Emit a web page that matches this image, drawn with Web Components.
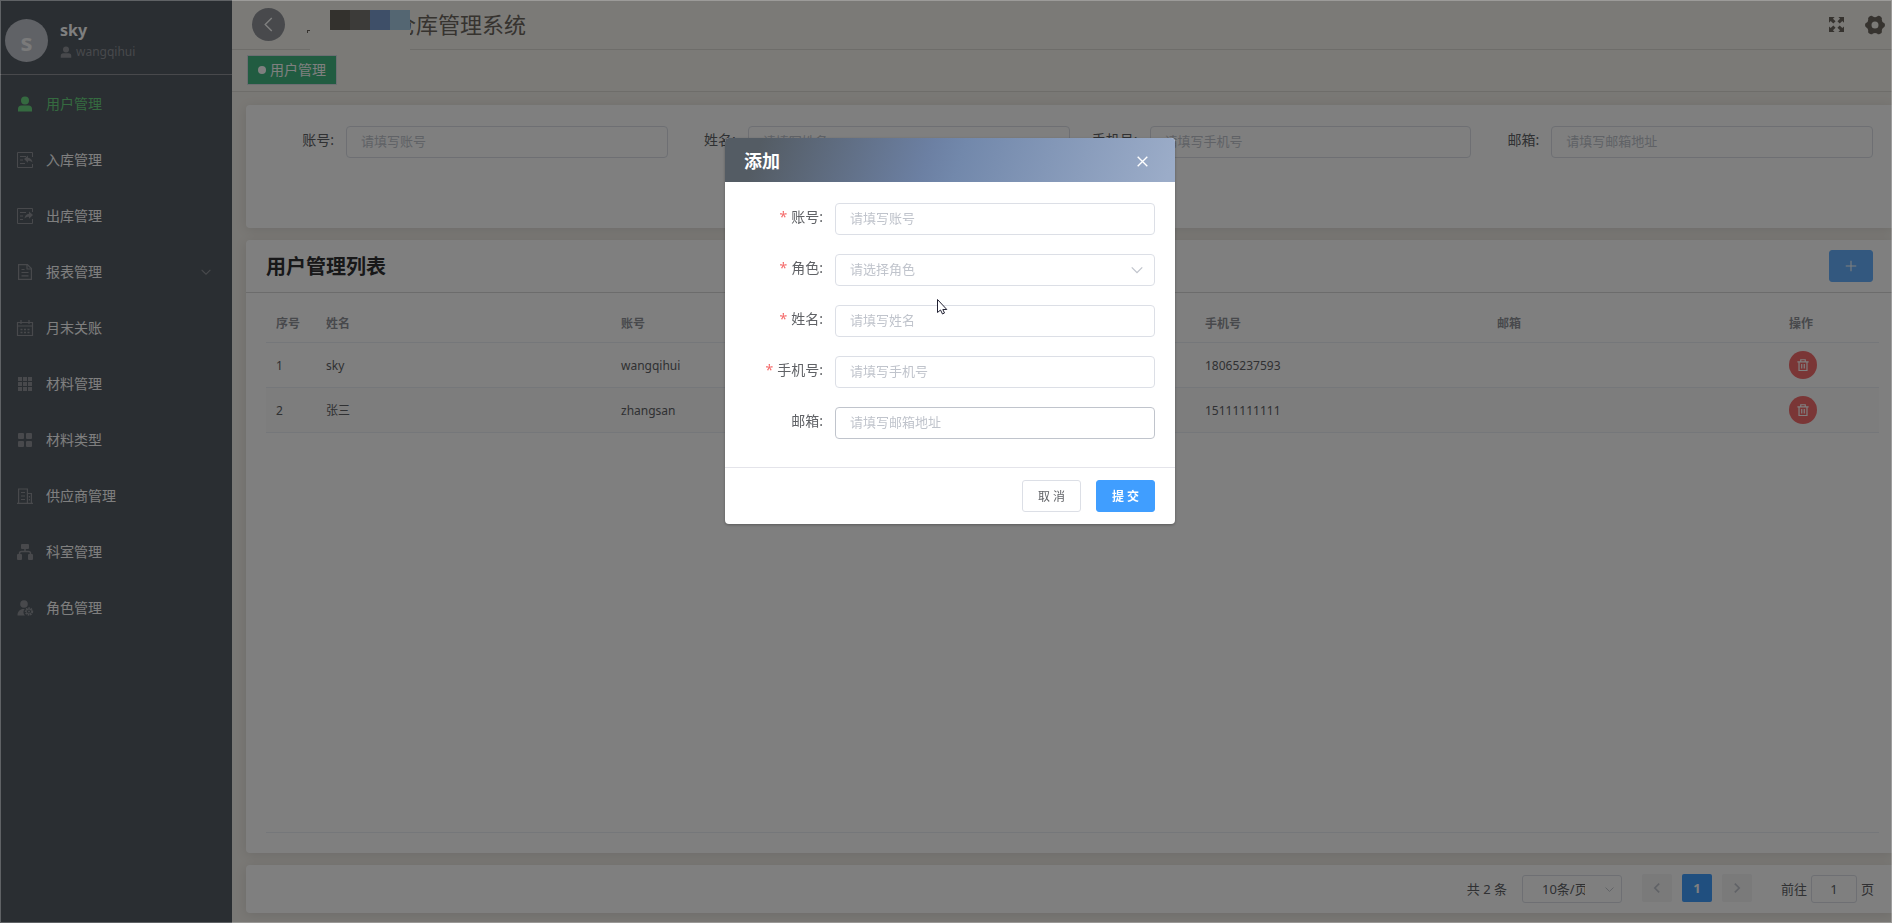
<!DOCTYPE html>
<html lang="zh-CN">
<head>
<meta charset="utf-8">
<meta name="viewport" content="width=device-width, initial-scale=1">
<title>仓库管理系统</title>
<style>
html, body { margin: 0; }
body {
  font-family: "Noto Sans", "Noto Sans CJK SC", sans-serif;
  font-size: 14px;
  line-height: 20px;
  color: #606266;
  background: #f3f0ea;
  overflow-x: hidden;
}
</style>
</head>
<body>
<app-root></app-root>

<script>
const BASE = `<style>
*, *::before, *::after { box-sizing: border-box; }
button, input, select { font-family: inherit; margin: 0; }
a { color: inherit; text-decoration: none; }
</style>`;

function define(name, render) {
  customElements.define(name, class extends HTMLElement {
    connectedCallback() {
      if (this.shadowRoot) return;
      const t = document.createElement('template');
      t.innerHTML = BASE + render(this);
      this.attachShadow({ mode: 'open' }).append(t.content.cloneNode(true));
    }
  });
}

const ICONS = {
  user: '<circle cx="8" cy="4.500" r="4"/><path d="M1 15.500v-2.500a3.500 3.500 0 0 1 3.500-3.500h7a3.500 3.500 0 0 1 3.500 3.500v2.500z"/>',
  inbound: '<g fill="none" stroke="currentColor"><path d="M15.500 5V.5H.5v15h15V12"/><path d="M3 4.500h6M3 8h3M3 11.500h5"/></g><path d="M7 7l4-3.500v2.200c2.500.2 4.300 2 4.500 4.800-1.200-1.300-2.500-1.800-4.500-1.800v2.100z"/>',
  outbound: '<g fill="none" stroke="currentColor"><path d="M15.500 4V.5H.5v15h15V11"/><path d="M3 4.500h6M3 8h3M3 11.500h3"/></g><path d="M16 7l-4-3.500v2.200c-2.500.2-4.300 2-4.500 4.800 1.200-1.300 2.500-1.800 4.500-1.800v2.100z"/>',
  doc: '<g fill="none" stroke="currentColor" stroke-width="1.200"><path d="M1.600.6h8.800l4 4v10.800H1.600z"/><path d="M10 .6v4.400h4.400M4.500 5.500h3M4.500 8.500h7M4.500 11.800h7"/></g>',
  calendar: '<g fill="none" stroke="currentColor" stroke-width="1.200"><path d="M.5 2.500h15v13H.5zM.5 6h15M4 0v4M12 0v4"/><path stroke-width="1.500" stroke-dasharray="2 1.500" d="M3.500 9.500h9M3.500 12.500h9"/></g>',
  grid9: '<path d="M1 1h4v4H1zM6 1h4v4H6zM11 1h4v4h-4zM1 6h4v4H1zM6 6h4v4H6zM11 6h4v4h-4zM1 11h4v4H1zM6 11h4v4H6zM11 11h4v4h-4z"/>',
  grid4: '<rect x="1" y="1" width="6" height="6" rx="1"/><rect x="9" y="1" width="6" height="6" rx="1"/><rect x="1" y="9" width="6" height="6" rx="1"/><rect x="9" y="9" width="6" height="6" rx="1"/>',
  office: '<g fill="none" stroke="currentColor" stroke-width="1.200"><path d="M0 15.300h16M1.600 15V1h8.800v14M10.400 5.500h4V15M4 4.500h4M4 8h4M4 11.500h4"/><path d="M12.400 8v1.500M12.400 11v1.500"/></g>',
  tree: '<rect x="4" y="0" width="8" height="5" rx="1"/><rect x="0" y="10" width="5" height="6" rx="1"/><rect x="11" y="10" width="5" height="6" rx="1"/><path fill="none" stroke="currentColor" stroke-width="1.500" d="M8 4v3.500M2.500 11V9.500q0-2 2-2h7q2 0 2 2V11"/>',
  role: '<circle cx="7" cy="4" r="3.800"/><path d="M.5 15.500c0-4 2.500-6.500 6-6.500h1.200c-1.800 2-1.600 4.700.2 6.500z"/><circle cx="12" cy="11.500" r="3.300" fill="none" stroke="currentColor" stroke-width="1.800" stroke-dasharray="1.600 .8"/><circle cx="12" cy="11.500" r="2.500" fill="none" stroke="currentColor"/><circle cx="12" cy="11.500" r="1"/>',
  down: '<path fill="none" stroke="currentColor" stroke-width="1.700" d="M1 4.500l7 7 7-7"/>',
  left: '<path fill="none" stroke="currentColor" stroke-width="1.500" d="M11.500 1l-7 7 7 7"/>',
  prev: '<path fill="none" stroke="currentColor" stroke-width="2.600" d="M11.500 1l-7 7 7 7"/>',
  next: '<path fill="none" stroke="currentColor" stroke-width="2.600" d="M4.500 1l7 7-7 7"/>',
  close: '<path fill="none" stroke="currentColor" stroke-width="2" d="M1 1l14 14M15 1L1 15"/>',
  plus: '<path fill="none" stroke="currentColor" stroke-width="1.400" d="M8 1v14M1 8h14"/>',
  trash: '<g fill="none" stroke="currentColor" stroke-width="1.600"><path d="M.5 3.700h15M5 3.500V1h6v2.500M2.700 4v11.300h10.600V4M6.300 6.500v6M9.700 6.500v6"/></g>',
  full: '<path d="M0 0h6L4.200 1.800 7 4.600 4.600 7 1.800 4.200 0 6zM16 0v6l-1.800-1.800L11.400 7 9 4.600l2.800-2.800L10 0zM0 16v-6l1.800 1.800L4.600 9 7 11.400l-2.800 2.800L6 16zM16 16h-6l1.800-1.800L9 11.400 11.400 9l2.800 2.800L16 10z"/>',
  gear: '<path fill-rule="evenodd" d="M4.200.8q1.300-.7 2.100.4 1.700 1 3.400 0 .8-1.100 2.100-.4l1.100.7q1 .8.500 2 .1 1.900 1.500 2.600 1.100.3 1.100 1.900t-1.100 1.900q-1.400.7-1.500 2.600.5 1.200-.5 2l-1.100.7q-1.300.7-2.100-.4-1.700-1-3.400 0-.8 1.100-2.100.4l-1.100-.7q-1-.8-.5-2-.1-1.900-1.500-2.600Q0 9.600 0 8t1.100-1.900q1.400-.7 1.500-2.600-.5-1.200.5-2zM8 5.200a2.800 2.800 0 1 0 0 5.600 2.800 2.800 0 0 0 0-5.600z"/>'
};

define('ui-icon', el => {
  const s = el.getAttribute('size') || 14;
  return `<style>
:host { display: inline-flex; flex: none; width: ${s}px; height: ${s}px; }
svg { width: 100%; height: 100%; fill: currentColor; display: block; overflow: visible; }
</style><svg viewBox="0 0 16 16" aria-hidden="true">${ICONS[el.getAttribute('name')]}</svg>`;
});

define('user-badge', () => `<style>
:host { display: flex; align-items: center; height: 75px; padding: 6px 5px 0; gap: 12px; border-bottom: 1px solid #909399; }
.avatar { flex: none; width: 43px; height: 43px; border-radius: 50%; background: #c0c4cc; color: #f4f4f5; font-size: 24px; font-weight: 700; line-height: 46px; text-align: center; }
.name { color: #fff; font-size: 16px; font-weight: 700; line-height: 24px; }
.account { display: flex; align-items: center; gap: 4px; color: #909399; font-size: 12px; line-height: 20px; }
</style>
<div class="avatar">s</div>
<div><div class="name">sky</div>
<div class="account"><ui-icon name="user" size="12"></ui-icon>wangqihui</div></div>`);

define('menu-item', el => `<style>
:host { display: block; }
a { display: flex; align-items: center; height: 56px; padding: 0 21px 0 17px; gap: 13px; color: #fff; }
ui-icon { color: #909399; }
:host([active]) a, :host([active]) ui-icon { color: #6ad580; }
.arrow { margin-left: auto; }
</style>
<a href="#"><ui-icon name="${el.getAttribute('icon')}" size="16"></ui-icon><slot></slot>${el.hasAttribute('sub') ? '<ui-icon class="arrow" name="down" size="10"></ui-icon>' : ''}</a>`);

define('side-menu', () => `<style>
:host { display: block; background: #545c64; }
nav { padding-top: 1px; }
</style>
<user-badge></user-badge>
<nav>
<menu-item icon="user" active>用户管理</menu-item>
<menu-item icon="inbound">入库管理</menu-item>
<menu-item icon="outbound">出库管理</menu-item>
<menu-item icon="doc" sub>报表管理</menu-item>
<menu-item icon="calendar">月末关账</menu-item>
<menu-item icon="grid9">材料管理</menu-item>
<menu-item icon="grid4">材料类型</menu-item>
<menu-item icon="office">供应商管理</menu-item>
<menu-item icon="tree">科室管理</menu-item>
<menu-item icon="role">角色管理</menu-item>
</nav>`);

define('top-bar', () => `<style>
:host { display: flex; align-items: center; height: 50px; padding: 0 7px 0 20px; border-bottom: 1px solid #dcdad4; position: relative; color: #6c665e; }
button { border: 0; padding: 0; background: none; color: inherit; display: grid; place-items: center; }
.back { width: 33px; height: 33px; border-radius: 50%; background: #909399; color: #fff; }
h1 { margin: 0 auto 0 109px; padding-bottom: 2px; font-size: 22px; line-height: 32px; font-weight: 400; color: #6c665e; }
.tools { display: flex; align-items: center; gap: 21px; }
.mask { position: absolute; left: 78px; top: 10px; width: 100px; height: 40px; background: #f6f4ef; }
.mask i { float: left; width: 20px; height: 20px; background: var(--c); }
.mask i:first-child { margin-left: 20px; }
.dash { position: absolute; left: 75px; top: 30px; width: 3px; height: 3px; border: solid #6c665e; border-width: 1px 0 0 1px; }
</style>
<button class="back" aria-label="返回"><ui-icon name="left" size="15"></ui-icon></button>
<h1>仓库管理系统</h1>
<span class="dash"></span>
<span class="mask"><i style="--c:#66635b"></i><i style="--c:#797673"></i><i style="--c:#7c9fd0"></i><i style="--c:#a8cde4"></i></span>
<div class="tools">
<button aria-label="全屏"><ui-icon name="full" size="15"></ui-icon></button>
<button aria-label="设置"><ui-icon name="gear" size="20"></ui-icon></button>
</div>`);

define('tag-bar', () => `<style>
:host { display: flex; align-items: flex-start; height: 42px; padding: 5px 15px; border-bottom: 1px solid #dcdad4; }
a { display: flex; align-items: center; gap: 4px; height: 30px; padding: 0 10px; background: #42b983; border: 1px solid #d8dce5; color: #fff; }
a::before { content: ""; width: 8px; height: 8px; border-radius: 50%; background: #fff; }
</style><a href="#">用户管理</a>`);

define('panel-card', () => `<style>
:host { display: block; background: #fff; border-radius: 4px 0 0 4px; box-shadow: 0 2px 12px rgba(0,0,0,.1); }
</style><slot></slot>`);

define('form-field', el => {
  const label = el.getAttribute('label'), ph = el.getAttribute('placeholder');
  const control = el.hasAttribute('select')
    ? `<select id="c"><option>${ph}</option></select><ui-icon name="down" size="12"></ui-icon>`
    : `<input id="c" type="text" placeholder="${ph}">`;
  return `<style>
:host { display: flex; align-items: center; min-width: 0; }
label { flex: none; width: var(--label-width, 80px); height: 32px; padding-right: 12px; text-align: right; line-height: 28px; }
:host([required]) label::before { content: "*"; color: #f56c6c; margin-right: 4px; }
.box { position: relative; flex: 1; min-width: 0; display: flex; }
input, select { width: 100%; height: 32px; padding: 0 14px 2px; border: 1px solid #dcdfe6; border-radius: 4px; background: #fff; font-size: 13px; color: #606266; outline: 0; appearance: none; }
select, input::placeholder { color: #c0c4cc; opacity: 1; }
:host([hovered]) input { border-color: #c0c4cc; }
ui-icon { position: absolute; right: 12px; top: 10px; color: #c0c4cc; pointer-events: none; }
</style><label for="c">${label}:</label><span class="box">${control}</span>`;
});

define('search-form', () => `<style>
:host { display: block; }
form { display: grid; grid-template-columns: repeat(4, 1fr); padding: 21px 19px 70px 20px; }
</style>
<form>
<form-field label="账号" placeholder="请填写账号"></form-field>
<form-field label="姓名" placeholder="请填写姓名"></form-field>
<form-field label="手机号" placeholder="请填写手机号"></form-field>
<form-field label="邮箱" placeholder="请填写邮箱地址"></form-field>
</form>`);

define('user-list', () => {
  const rows = [[1, 'sky', 'wangqihui', '18065237593'], [2, '张三', 'zhangsan', '15111111111']];
  return `<style>
:host { display: flex; flex-direction: column; height: 100%; }
header { display: flex; align-items: center; justify-content: space-between; height: 53px; padding: 0 19px 0 20px; border-bottom: 1px solid #d9d9d9; }
h2 { margin: 0; padding-top: 2px; font-size: 20px; line-height: 28px; font-weight: 700; color: #303133; }
.add { width: 44px; height: 32px; padding: 0; border: 1px solid #66b1ff; border-radius: 3px; background: #66b1ff; color: #fff; display: grid; place-items: center; }
.body { flex: 1; margin: 10px 13px 20px 20px; border-bottom: 1px solid #ebeef5; }
table { width: 100%; table-layout: fixed; border-collapse: separate; border-spacing: 0; font-size: 12px; line-height: 20px; text-align: left; }
th, td { padding: 2px 10px 0; border-bottom: 1px solid #ebeef5; }
th { height: 40px; color: #909399; font-weight: 700; }
td { height: 45px; color: #606266; }
td:last-child { padding-top: 0; }
tr:nth-child(even) td { background: #fafafa; }
.no { width: 50px; } .name { width: 295px; } .op { width: 100px; }
.del { width: 28px; height: 28px; padding: 0; border: 0; border-radius: 50%; background: #f56c6c; color: #fff; display: grid; place-items: center; }
</style>
<header><h2>用户管理列表</h2><button class="add" aria-label="添加"><ui-icon name="plus" size="12"></ui-icon></button></header>
<div class="body"><table>
<thead><tr><th class="no">序号</th><th class="name">姓名</th><th>账号</th><th></th><th>手机号</th><th>邮箱</th><th class="op">操作</th></tr></thead>
<tbody>${rows.map(r => `<tr><td>${r[0]}</td><td>${r[1]}</td><td>${r[2]}</td><td></td><td>${r[3]}</td><td></td><td><button class="del" aria-label="删除"><ui-icon name="trash" size="12"></ui-icon></button></td></tr>`).join('')}</tbody>
</table></div>`;
});

define('page-nav', () => `<style>
:host { display: flex; justify-content: flex-end; align-items: center; height: 48px; padding: 0 18px; font-size: 13px; }
.size { position: relative; margin: 0 20px 0 15px; display: flex; }
select, input { height: 28px; border: 1px solid #dcdfe6; border-radius: 3px; background: #fff; color: #606266; font-size: 13px; text-align: center; appearance: none; outline: 0; }
select { width: 100px; padding: 0 36px 0 19px; }
.size ui-icon { position: absolute; right: 8px; top: 10px; color: #c0c4cc; pointer-events: none; }
.pages { display: flex; gap: 10px; margin-right: 29px; }
.pages button { width: 30px; height: 28px; margin-bottom: 2px; padding: 0; border: 0; border-radius: 2px; background: #f4f4f5; color: #c0c4cc; font-size: 13px; font-weight: 700; display: grid; place-items: center; }
.pages .on { background: #409eff; color: #fff; }
label { display: flex; align-items: center; gap: 4px; }
input { width: 46px; padding: 0 3px; }
</style>
<span>共 2 条</span>
<span class="size"><select aria-label="每页条数"><option>10条/页</option></select><ui-icon name="down" size="9"></ui-icon></span>
<span class="pages"><button aria-label="上一页"><ui-icon name="prev" size="10"></ui-icon></button><button class="on">1</button><button aria-label="下一页"><ui-icon name="next" size="10"></ui-icon></button></span>
<label>前往<input type="text" value="1">页</label>`);

define('modal-layer', () => `<style>
:host { position: fixed; inset: 0; display: flex; justify-content: center; align-items: flex-start; padding: 138px 0 0 8px; background: rgba(0,0,0,.5); }
:host::after { content: ""; position: absolute; inset: 0; border: 1px solid rgba(255,255,255,.25); pointer-events: none; }
</style><slot></slot>`);

define('user-dialog', () => `<style>
:host { display: block; width: 450px; background: #fff; border-radius: 4px; box-shadow: 0 1px 3px rgba(0,0,0,.3); --label-width: 90px; }
header { display: flex; align-items: center; justify-content: space-between; height: 44px; padding: 2px 27px 0 19px; border-radius: 4px 4px 0 0; background: linear-gradient(110deg, #545c64 8%, #6c80a3 45%, #7288ab 52%, #9bacc8 98%); color: #fff; }
h2 { margin: 0; font-size: 18px; line-height: 26px; font-weight: 700; }
button { font-size: 12px; }
header button { border: 0; padding: 0; background: none; color: #fff; display: grid; }
.fields { display: grid; gap: 19px; padding: 21px 20px 28px; }
footer { display: flex; justify-content: flex-end; gap: 15px; padding: 12px 20px; border-top: 1px solid #e4e4ea; }
footer button { min-width: 59px; height: 32px; padding: 0 14px; border: 1px solid #dcdfe6; border-radius: 3px; background: #fff; color: #606266; }
footer .primary { background: #409eff; border-color: #409eff; color: #fff; font-weight: 700; }
</style>
<header><h2>添加</h2><button type="button" aria-label="关闭"><ui-icon name="close" size="11"></ui-icon></button></header>
<form>
<div class="fields">
<form-field required label="账号" placeholder="请填写账号"></form-field>
<form-field required select label="角色" placeholder="请选择角色"></form-field>
<form-field required label="姓名" placeholder="请填写姓名"></form-field>
<form-field required label="手机号" placeholder="请填写手机号"></form-field>
<form-field hovered label="邮箱" placeholder="请填写邮箱地址"></form-field>
</div>
<footer><button type="button">取 消</button><button type="button" class="primary">提 交</button></footer>
</form>`);

define('mouse-pointer', () => `<style>
:host { position: absolute; left: 937px; top: 299px; pointer-events: none; }
svg { display: block; }
</style><svg width="12" height="17" viewBox="0 0 12 17"><path d="M.5.5v13l3-2.500 2 4 2-1-1.700-3.500h4z" fill="#fff" stroke="#222233"/></svg>`);

define('app-root', () => `<style>
:host { display: grid; grid-template-columns: 232px minmax(0, 1fr); min-height: 100vh; }
main { display: flex; flex-direction: column; background: #f3f0ea; }
top-bar, tag-bar { background: #f6f4ef; }
.content { flex: 1; display: flex; flex-direction: column; gap: 12px; padding: 13px 0 10px 14px; }
.list { flex: 1; }
</style>
<side-menu></side-menu>
<main>
<top-bar></top-bar>
<tag-bar></tag-bar>
<div class="content">
<panel-card><search-form></search-form></panel-card>
<panel-card class="list"><user-list></user-list></panel-card>
<panel-card><page-nav></page-nav></panel-card>
</div>
</main>
<modal-layer><user-dialog></user-dialog><mouse-pointer></mouse-pointer></modal-layer>`);
</script>
</body>
</html>
